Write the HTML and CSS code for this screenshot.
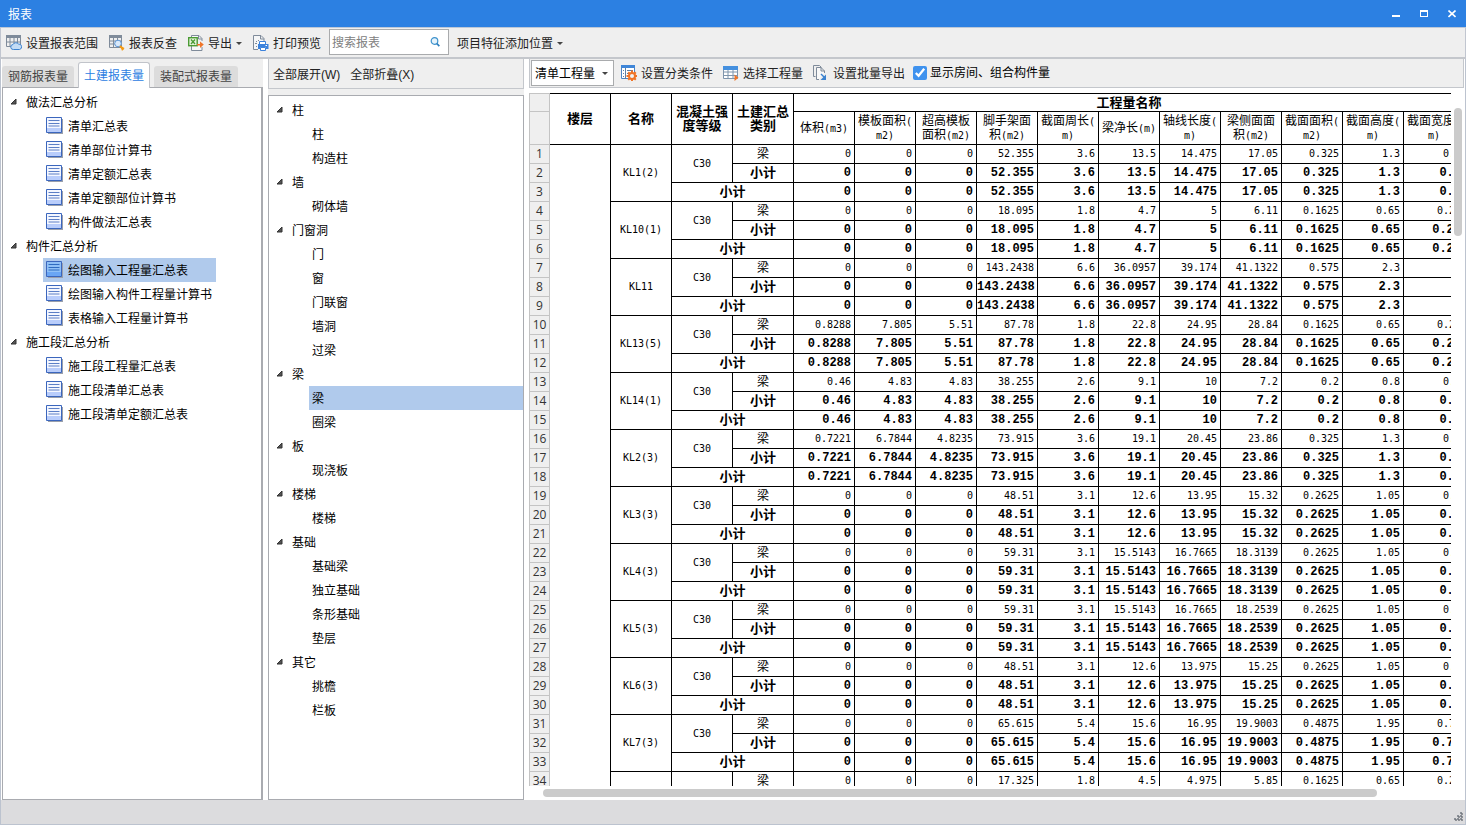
FILE: index.html
```html
<!DOCTYPE html>
<html lang="zh-CN">
<head>
<meta charset="utf-8">
<title>报表</title>
<link rel="stylesheet" href="styles.css">
</head>
<body>
<div class="window">
  <header class="titlebar">
    <h1 class="title">报表</h1>
    <div class="window-buttons">
      <button class="win-btn" aria-label="最小化"><svg width="8" height="8" viewBox="0 0 8 8"><path d="M0 5h8v2H0z" fill="#fff"/></svg></button>
      <button class="win-btn" aria-label="最大化"><svg width="8" height="8" viewBox="0 0 8 8"><path d="M0 0h8v7H0zM1 2v4h6V2z" fill="#fff" fill-rule="evenodd"/></svg></button>
      <button class="win-btn" aria-label="关闭"><svg width="8" height="8" viewBox="0 0 8 8"><path d="M.5 .5l7 6.500M7.500 .5l-7 6.500" stroke="#fff" stroke-width="1.600"/></svg></button>
    </div>
  </header>

  <nav class="toolbar">
    <button class="tool"><svg class="icon" viewBox="0 0 16 16"><path d="M0 0h15v3H0z" fill="#7f8b9a"/><path d="M.5 .5h14v11H.5zM.5 7h14M4 2v10M8 2v10M11.500 2v10" fill="none" stroke="#7f8b9a"/><path d="M7.500 14.500a2.500 2.500 0 0 1-.5-5 3.300 3.300 0 0 1 5.500-.5 2.800 2.800 0 0 1 1 5.500z" fill="#c3dcf5" stroke="#3c82cf"/></svg>设置报表范围</button>
    <button class="tool"><svg class="icon" viewBox="0 0 16 16"><path d="M0 0h13v3H0z" fill="#7f8b9a"/><path d="M.5 .5h12v12H.5zM.5 6h12M.5 9h12M4.500 2v11M8.500 2v11" fill="none" stroke="#7f8b9a"/><circle cx="9" cy="8.500" r="3.300" fill="#d9e9fa" stroke="#5d97d8"/><path d="M11.500 11l4 2-2.500 3z" fill="#f49a14"/><path d="M11 11l3.500 3.500" stroke="#f49a14" stroke-width="2"/></svg>报表反查</button>
    <button class="tool"><svg class="icon" viewBox="0 0 16 16"><path d="M3.500 3V.5H11l3 3V6M14 12v3.500H3.500V11M10.500 .5v3.500H14" fill="#f8f8f8" stroke="#7f8b9a"/><rect x=".7" y="2.700" width="8.500" height="8" fill="#e6f3dc" stroke="#4b9b35" stroke-width="1.400"/><path d="M3 4.500l4 4.500M7 4.500L3 9" stroke="#4b9b35" stroke-width="1.300"/><path d="M9 9h3V6.500L15.800 9.500 12 13v-2.500H9z" fill="#f07528"/></svg>导出<span class="caret"></span></button>
    <button class="tool"><svg class="icon" viewBox="0 0 16 16"><path d="M5 14.500H.5V.5H8l3 3V6M7.500 .5V4H11" fill="#f5f6f7" stroke="#7f8b9a"/><path d="M3 6h1v1H3zM5 5h1v1H5zM2 8h2v1H2zM3 11h1v1H3z" fill="#7f8b9a"/><path d="M6.500 9.500V6.500h6v3" fill="#fff" stroke="#3c82dc"/><path d="M5 9h10.500v5H13v-2H7.500v2H5z" fill="#3c82dc"/><path d="M7.500 12.500h5v3h-5z" fill="#fff" stroke="#3c82dc"/><path d="M12.500 10h1.500v1h-1.500z" fill="#fff"/></svg>打印预览</button>
    <label class="search"><input type="text" placeholder="搜索报表" aria-label="搜索报表"><svg width="10" height="10" viewBox="0 0 10 10"><circle cx="4.500" cy="4" r="3.300" fill="#e7f4fc" stroke="#3f93cd" stroke-width="1.200"/><path d="M6.800 6.500L9.300 9.200" stroke="#2f7fbe" stroke-width="1.700"/></svg></label>
    <button class="tool">项目特征添加位置<span class="caret"></span></button>
  </nav>

  <main class="panes">
    <section class="pane-left">
      <div class="tabs">
        <button class="tab">钢筋报表量</button>
        <button class="tab tab-active">土建报表量</button>
        <button class="tab">装配式报表量</button>
      </div>
      <ul class="tree tree-reports" id="reports"></ul>
    </section>

    <section class="pane-middle">
      <div class="subbar">
        <button class="tool">全部展开(W)</button>
        <button class="tool">全部折叠(X)</button>
      </div>
      <ul class="tree tree-parts" id="parts"></ul>
    </section>

    <section class="pane-right">
      <div class="subbar subbar-right">
        <label class="combo"><select aria-label="工程量类型"><option>清单工程量</option></select><span class="caret"></span></label>
        <button class="tool"><svg class="icon" viewBox="0 0 16 16"><path d="M.5 .5h13v13H.5z" fill="#fff" stroke="#4c84c4"/><path d="M0 0h14v3H0z" fill="#3f86d8"/><path d="M4.500 3v11M6 5.500h6M6 8.500h3M6 11.500h2M2 5.500h1M2 8.500h1M2 11.500h1" stroke="#5f7fa2"/><path d="M11 5.500v11M5.500 11h11M7.200 7.200l7.600 7.600M14.800 7.200l-7.600 7.600" stroke="#f07528" stroke-width="2"/><circle cx="11" cy="11" r="3" fill="#f4f4f4" stroke="#f07528" stroke-width="2"/></svg>设置分类条件</button>
        <button class="tool"><svg class="icon" viewBox="0 0 16 16"><path d="M.5 1.500h14v12H.5z" fill="#fff"/><path d="M.5 1.500h14v12H.5zM.5 7h14M.5 10.500h14M5 4v10M10 4v10" fill="none" stroke="#7f95ac"/><path d="M0 1h15v4H0z" fill="#4590df"/><path d="M11.500 9.500l4 3.300-4 3.200z" fill="#f07528"/></svg>选择工程量</button>
        <button class="tool"><svg class="icon" viewBox="0 0 16 16"><path d="M2.500 11.500H.5V.5h6l2 2" fill="none" stroke="#7f8b9a"/><path d="M6 14.500H3.500V2.500H8l3.500 3.500V8M8 2.500V6h3.500" fill="#f8f8f8" stroke="#7f8b9a"/><path d="M8 9l4 4" stroke="#3c82cf" stroke-width="1.500"/><path d="M13 9.500V15H7.500z" fill="#3c82cf"/></svg>设置批量导出</button>
        <label class="check"><input type="checkbox" checked>显示房间、组合构件量</label>
      </div>
      <div class="sheet">
        <div class="sheet-view">
          <table class="grid">
            <colgroup><col class="col-index"><col span="15" class="col-data"></colgroup>
            <thead>
              <tr class="head-top">
                <th class="index"></th>
                <th rowspan="2">楼层</th>
                <th rowspan="2">名称</th>
                <th rowspan="2">混凝土强<br>度等级</th>
                <th rowspan="2">土建汇总<br>类别</th>
                <th colspan="11">工程量名称</th>
              </tr>
              <tr class="head-sub">
                <th class="index"></th>
                <th>体积<span class="unit">(m3)</span></th>
                <th>模板面积<span class="unit">(<br>m2)</span></th>
                <th>超高模板<br>面积<span class="unit">(m2)</span></th>
                <th>脚手架面<br>积<span class="unit">(m2)</span></th>
                <th>截面周长<span class="unit">(<br>m)</span></th>
                <th>梁净长<span class="unit">(m)</span></th>
                <th>轴线长度<span class="unit">(<br>m)</span></th>
                <th>梁侧面面<br>积<span class="unit">(m2)</span></th>
                <th>截面面积<span class="unit">(<br>m2)</span></th>
                <th>截面高度<span class="unit">(<br>m)</span></th>
                <th>截面宽度<span class="unit">(<br>m)</span></th>
              </tr>
            </thead>
            <tbody id="rows"></tbody>
          </table>
        </div>
        <div class="scroll-y"><div class="thumb-y"></div></div>
        <div class="scroll-x"><div class="thumb-x"></div></div>
      </div>
    </section>
  </main>

  <footer class="statusbar">
    <svg width="10" height="10" viewBox="0 0 10 10"><path d="M7 0h2v2H7zM7 3h2v2H7zM4 3h2v2H4zM7 6h2v2H7zM4 6h2v2H4zM1 6h2v2H1z" fill="#8b9097"/><path d="M8 1h2v2H8zM8 4h2v2H8zM5 4h2v2H5zM8 7h2v2H8zM5 7h2v2H5zM2 7h2v2H2z" fill="#6c7178" opacity=".7"/></svg>
  </footer>
</div>
<script src="app.js"></script>
</body>
</html>
```
FILE: styles.css
```css
* {
  box-sizing: border-box;
}

body {
  margin: 0;
  font-family: "Liberation Sans", "Noto Sans CJK SC", sans-serif;
  font-size: 12px;
  line-height: 16px;
  color: #000;
}

button,
input,
select {
  font: inherit;
  color: inherit;
  border: 0;
  padding: 0;
  background: none;
}

.window {
  display: flex;
  flex-direction: column;
  height: 100vh;
  overflow: hidden;
  background: #efefef;
}

.titlebar {
  display: flex;
  flex: none;
  align-items: center;
  justify-content: space-between;
  height: 27px;
  padding: 0 10px 0 8px;
  background: #2c80e2;
  color: #fff;
}

.title {
  margin: 0;
  padding-top: 2px;
  font-size: 12px;
  font-weight: normal;
}

.window-buttons {
  display: flex;
  gap: 20px;
}

.win-btn {
  display: flex;
  width: 8px;
}

.toolbar {
  display: flex;
  flex: none;
  align-items: center;
  gap: 11px;
  height: 32px;
  padding: 0 5px 2px;
  border: 1px solid #c1c6d0;
  border-top-color: #bcc8d8;
  border-bottom: 2px solid #c4c7cc;
}

.tool {
  display: flex;
  align-items: center;
  gap: 4px;
  padding-top: 2px;
  color: #222;
  white-space: nowrap;
}

.toolbar .tool {
  padding-top: 4px;
}

.icon {
  width: 16px;
  height: 16px;
  margin-bottom: 2px;
  flex: none;
}

.caret {
  width: 6px;
  border: 3px solid transparent;
  border-top-color: #444;
  border-bottom: 0;
}

.search {
  display: flex;
  align-items: center;
  width: 120px;
  height: 26px;
  margin: 0 -3px;
  padding: 0 8px 0 2px;
  border: 1px solid #a9abad;
  background: #fff;
}

.search input {
  flex: 1;
  min-width: 0;
  padding-top: 2px;
  outline: 0;
}

.search input::placeholder {
  color: #808080;
}

.panes {
  display: flex;
  flex: 1;
  gap: 5px;
  min-height: 0;
  padding: 0 1px;
  border: 1px solid #bcc3cf;
  border-width: 0 1px;
  background: #fff;
}

.pane-left {
  display: flex;
  flex-direction: column;
  width: 261px;
  background: #efefef;
}

.tabs {
  display: flex;
  flex: none;
  align-items: flex-end;
  gap: 4px;
  height: 29px;
  border-bottom: 1px solid #a9abb0;
}

.tab {
  height: 21px;
  padding: 1px 6px 0;
  border-radius: 3px 3px 0 0;
  background: #dcdcdc;
  color: #444;
}

.tab-active {
  height: 26px;
  margin-bottom: -1px;
  padding: 0 5px;
  border: 1px solid #c1c4ca;
  border-bottom: 0;
  background: #fff;
  color: #2c80e2;
}

.tree,
.tree ul {
  margin: 0;
  padding: 0;
  list-style: none;
}

.tree {
  flex: 1;
  min-height: 0;
  overflow: hidden;
  border: 1px solid #a9abb0;
  background: #fff;
}

.tree-reports {
  padding-top: 2px;
  border-top: 0;
  border-right-width: 2px;
}

.tree-parts {
  padding-top: 2px;
}

.branch,
.leaf {
  display: flex;
  align-items: center;
  height: 24px;
  padding-top: 2px;
  white-space: nowrap;
}

.branch {
  gap: 9px;
  padding-left: 7px;
}

.branch svg {
  width: 7px;
  height: 7px;
  margin-bottom: 3px;
}

.tree-reports .leaf {
  gap: 5px;
  margin-left: 40px;
  padding-right: 4px;
  padding-left: 3px;
}

.leaf svg {
  width: 17px;
  height: 17px;
  margin-bottom: 3px;
}

.tree-reports .leaf-selected {
  padding-right: 28px;
}

.tree-parts .leaf {
  width: calc(100% - 40px);
  margin-left: 40px;
  padding-left: 3px;
}

.leaf-selected {
  background: #b0caec;
}

.pane-middle {
  display: flex;
  flex-direction: column;
  gap: 6px;
  width: 256px;
  background: #efefef;
}

.subbar {
  display: flex;
  flex: none;
  align-items: center;
  gap: 10px;
  height: 30px;
  padding: 0 4px;
  border: 1px solid #c4c7cc;
  border-top: 0;
  background: #efefef;
}

.pane-right {
  display: flex;
  flex: 1;
  flex-direction: column;
  min-width: 0;
}

.subbar-right {
  height: 29px;
  padding: 0 1px;
}

.combo {
  display: flex;
  align-items: center;
  width: 83px;
  height: 26px;
  margin-right: -3px;
  padding: 0 5px 0 3px;
  border: 1px solid #a9abad;
  background: #fff;
}

.combo select {
  flex: 1;
  min-width: 0;
  padding-top: 1px;
  appearance: none;
  outline: 0;
}

.check {
  display: flex;
  align-items: center;
  gap: 3px;
  margin-left: -2px;
  white-space: nowrap;
}

.check input {
  width: 14px;
  height: 14px;
  margin: 0;
  accent-color: #3f92ee;
}

.sheet {
  display: grid;
  flex: 1;
  grid-template-columns: 1fr 13px;
  grid-template-rows: 1fr 14px;
  min-height: 0;
  padding-top: 5px;
}

.sheet-view {
  min-width: 0;
  min-height: 0;
  overflow: hidden;
}

.grid {
  table-layout: fixed;
  width: 936px;
  border-spacing: 0;
  line-height: 14px;
}

.col-index {
  width: 21px;
}

.col-data {
  width: 61px;
}

.grid th,
.grid td {
  height: 19px;
  padding: 0;
  border: solid #000;
  border-width: 0 1px 1px 0;
  text-align: center;
  vertical-align: middle;
  white-space: nowrap;
}

.grid .head-top th {
  height: 19px;
  border-top-width: 1px;
  font-size: 13px;
}

.grid .head-sub th {
  height: 33px;
  font-weight: normal;
}

.grid .index {
  border-color: #c4c4c4;
  border-left-width: 1px;
  background: #efefef;
  color: #333;
  font-family: "Open Sans", sans-serif;
  font-size: 12px;
  font-weight: normal;
}

.grid .num {
  padding-right: 3px;
  text-align: right;
}

.unit,
.grid .mono,
.grid .num {
  font-family: "DejaVu Sans Mono", monospace;
  font-size: 10px;
}

.unit {
  line-height: 10px;
}

.grid .total {
  font-family: "Liberation Mono", monospace;
  font-size: 12px;
  font-weight: bold;
}

.grid .label-total {
  font-size: 13px;
  font-weight: bold;
}

.scroll-y {
  padding: 15px 2px 0 3px;
}

.thumb-y {
  width: 8px;
  height: 128px;
  border-radius: 4px;
  background: #cbcbcb;
}

.scroll-x {
  grid-column: 1 / -1;
  padding: 3px 87px 0 14px;
}

.thumb-x {
  height: 8px;
  border-radius: 4px;
  background: #cbcbcb;
}

.statusbar {
  display: flex;
  flex: none;
  align-items: flex-end;
  justify-content: flex-end;
  height: 25px;
  padding: 0 2px 2px;
  border: 1px solid #bcc3cf;
  border-top: 0;
  background: #dcdcde;
}
```
FILE: app.js
```js
const reports = [
  ["做法汇总分析", ["清单汇总表", "清单部位计算书", "清单定额汇总表", "清单定额部位计算书", "构件做法汇总表"]],
  ["构件汇总分析", ["绘图输入工程量汇总表", "绘图输入构件工程量计算书", "表格输入工程量计算书"]],
  ["施工段汇总分析", ["施工段工程量汇总表", "施工段清单汇总表", "施工段清单定额汇总表"]],
];

const parts = [
  ["柱", ["柱", "构造柱"]],
  ["墙", ["砌体墙"]],
  ["门窗洞", ["门", "窗", "门联窗", "墙洞", "过梁"]],
  ["梁", ["梁", "圈梁"]],
  ["板", ["现浇板"]],
  ["楼梯", ["楼梯"]],
  ["基础", ["基础梁", "独立基础", "条形基础", "垫层"]],
  ["其它", ["挑檐", "栏板"]],
];

const beams = [
  ["KL1(2)", "0 0 0 52.355 3.6 13.5 14.475 17.05 0.325 1.3 0.5"],
  ["KL10(1)", "0 0 0 18.095 1.8 4.7 5 6.11 0.1625 0.65 0.25"],
  ["KL11", "0 0 0 143.2438 6.6 36.0957 39.174 41.1322 0.575 2.3 1"],
  ["KL13(5)", "0.8288 7.805 5.51 87.78 1.8 22.8 24.95 28.84 0.1625 0.65 0.25"],
  ["KL14(1)", "0.46 4.83 4.83 38.255 2.6 9.1 10 7.2 0.2 0.8 0.5"],
  ["KL2(3)", "0.7221 6.7844 4.8235 73.915 3.6 19.1 20.45 23.86 0.325 1.3 0.5"],
  ["KL3(3)", "0 0 0 48.51 3.1 12.6 13.95 15.32 0.2625 1.05 0.5"],
  ["KL4(3)", "0 0 0 59.31 3.1 15.5143 16.7665 18.3139 0.2625 1.05 0.5"],
  ["KL5(3)", "0 0 0 59.31 3.1 15.5143 16.7665 18.2539 0.2625 1.05 0.5"],
  ["KL6(3)", "0 0 0 48.51 3.1 12.6 13.975 15.25 0.2625 1.05 0.5"],
  ["KL7(3)", "0 0 0 65.615 5.4 15.6 16.95 19.9003 0.4875 1.95 0.75"],
  ["KL8(1)", "0 0 0 17.325 1.8 4.5 4.975 5.85 0.1625 0.65 0.25"],
];

const arrow = '<svg viewBox="0 0 7 7"><path d="M6 1v5H1z" fill="#555" stroke="#333"/></svg>';
const sheetIcon = '<svg viewBox="0 0 17 17"><path d="M2 2h15v15H2z" fill="#9aa0ac"/><path class="paper" d="M.5 .5h15v15H.5z" fill="#f4f7ff" stroke="#3b66bd"/><path d="M1 11h14v4H1z" fill="#b9cdfb"/><path d="M2.500 3.500h11M2.500 6.500h11M2.500 9h11" stroke="#5c7fc6"/></svg>';
const sheetIconSelected = sheetIcon.replace("#f4f7ff", "#8fc0f6").replace("#b9cdfb", "#6aa6f4").replace("#5c7fc6", "#2f6cc0");

function renderTree(id, groups, selected, withIcon) {
  document.getElementById(id).innerHTML = groups.map(([name, items]) => {
    const leaves = items.map((item) => {
      const on = name + "/" + item === selected;
      const icon = withIcon ? (on ? sheetIconSelected : sheetIcon) : "";
      return `<li><button class="leaf${on ? " leaf-selected" : ""}">${icon}${item}</button></li>`;
    }).join("");
    return `<li><button class="branch">${arrow}${name}</button><ul>${leaves}</ul></li>`;
  }).join("");
}

function renderRows() {
  let index = 0;
  let html = "";
  beams.forEach(([name, text], group) => {
    const values = text.split(" ");
    const cells = (cls) => values.map((v) => `<td class="num${cls}">${v}</td>`).join("");
    const start = () => `<tr><th class="index">${++index}</th>`;
    html += start();
    if (group === 0) html += `<td rowspan="${beams.length * 3}"></td>`;
    html += `<td rowspan="3" class="mono">${name}</td><td rowspan="2" class="mono">C30</td><td>梁</td>${cells("")}</tr>`;
    html += `${start()}<td class="label-total">小计</td>${cells(" total")}</tr>`;
    html += `${start()}<td colspan="2" class="label-total">小计</td>${cells(" total")}</tr>`;
  });
  document.getElementById("rows").innerHTML = html;
}

renderTree("reports", reports, "构件汇总分析/绘图输入工程量汇总表", true);
renderTree("parts", parts, "梁/梁", false);
renderRows();
```
